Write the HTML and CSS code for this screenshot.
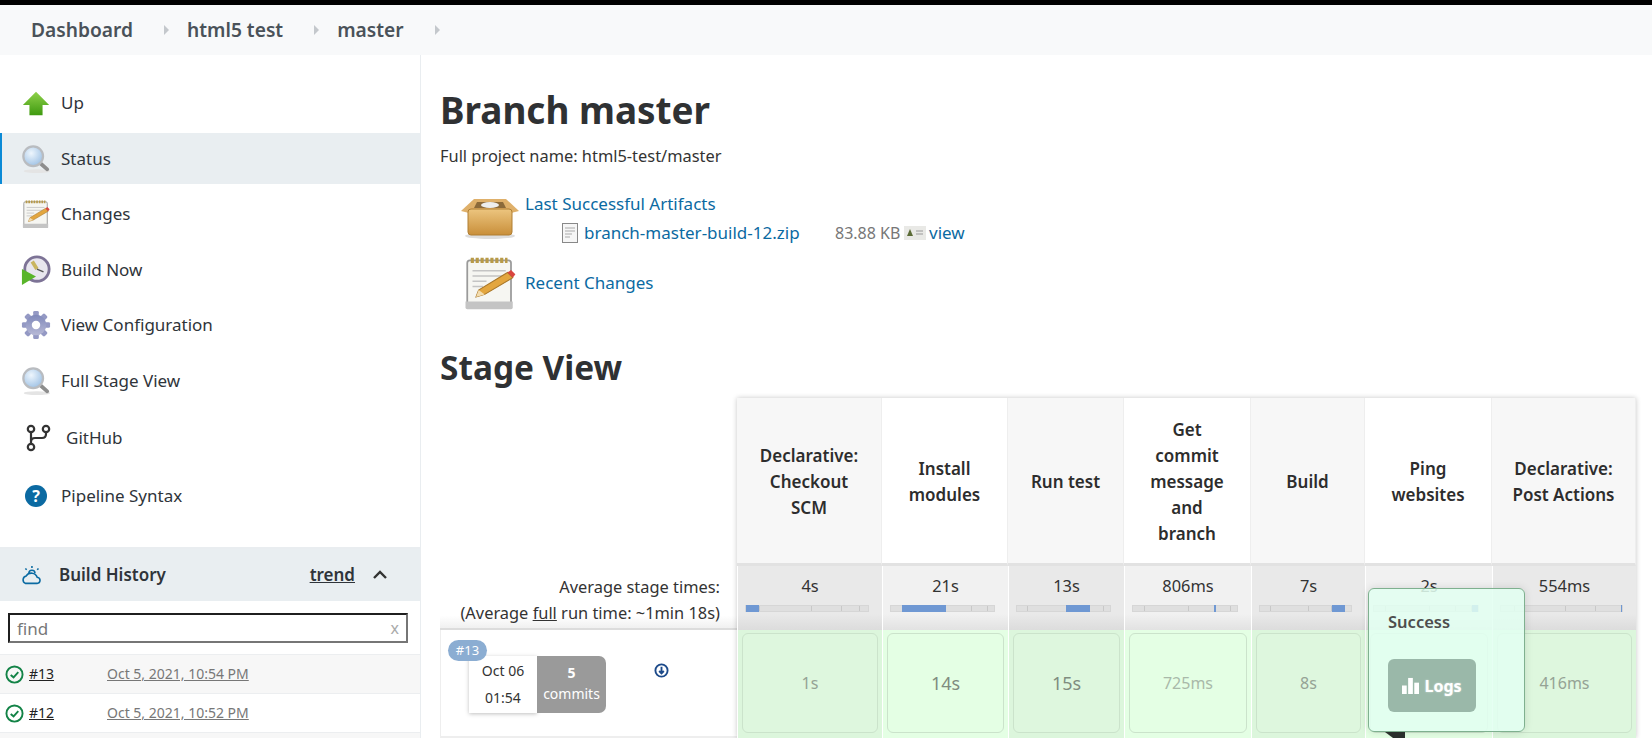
FILE: index.html
```html
<!DOCTYPE html>
<html lang="en">
<head>
<meta charset="utf-8">
<title>html5 test » master</title>
<link rel="stylesheet" href="styles.css">
</head>
<body>
<svg class="defs" width="0" height="0" aria-hidden="true">
  <defs>
    <linearGradient id="g-green" x1="0" y1="0" x2="0" y2="1"><stop offset="0" stop-color="#8fd14a"/><stop offset="1" stop-color="#3f9a10"/></linearGradient>
    <linearGradient id="g-gear" x1="0" y1="0" x2="0" y2="1"><stop offset="0" stop-color="#7f88ba"/><stop offset="1" stop-color="#b7b9d6"/></linearGradient>
    <linearGradient id="g-box" x1="0" y1="0" x2="0" y2="1"><stop offset="0" stop-color="#ecc57f"/><stop offset="1" stop-color="#c98f3a"/></linearGradient>
    <radialGradient id="g-lens" cx=".4" cy=".35" r=".7"><stop offset="0" stop-color="#eef6fd"/><stop offset="1" stop-color="#9cc0e4"/></radialGradient>
    <symbol id="i-mag" viewBox="0 0 32 32">
      <ellipse cx="17" cy="29" rx="14" ry="2" fill="#e4e4e4"/>
      <path d="M20 20l8 7" stroke="#8d8d8d" stroke-width="4" stroke-linecap="round"/>
      <circle cx="13" cy="13" r="10.5" fill="url(#g-lens)" stroke="#b9bcc0" stroke-width="2.4"/>
    </symbol>
    <symbol id="i-note" viewBox="0 0 32 32">
      <rect x="3" y="3" width="25" height="27" rx="1.5" fill="#f6f6f2" stroke="#9a9a9a"/>
      <path d="M5 3h21" stroke="#b89a48" stroke-width="3" stroke-dasharray="1.8 1"/>
      <path d="M6 9h19M6 12h19M6 15h8M6 18h6" stroke="#c4c4c4" stroke-width=".9"/>
      <path d="M2 26.500h27V30a1 1 0 0 1-1 1H3a1 1 0 0 1-1-1z" fill="#c4c4c4"/>
      <path d="M8 24l1.500-4L26 10l3 3-16 9.500z" fill="#e3a63f" stroke="#a8772a" stroke-width=".6"/>
      <path d="M26 10l3 3 1.500-2-2.500-2.500z" fill="#d9453f"/>
      <path d="M8 24l1.500-4 3.500 2.500z" fill="#f3dcae"/>
    </symbol>
  </defs>
</svg>

<div class="topline"></div>
<nav class="crumbs">
  <a class="crumb">Dashboard</a><span class="caret"></span>
  <a class="crumb">html5 test</a><span class="caret"></span>
  <a class="crumb">master</a><span class="caret"></span>
</nav>

<div class="page">
  <aside class="side">
    <ul class="tasks">
      <li class="task"><svg class="ico" viewBox="0 0 32 32"><path d="M16 4L30 18H23V29H9V18H2z" fill="url(#g-green)"/></svg>Up</li>
      <li class="task active"><svg class="ico"><use href="#i-mag"/></svg>Status</li>
      <li class="task"><svg class="ico"><use href="#i-note"/></svg>Changes</li>
      <li class="task"><svg class="ico" viewBox="0 0 32 32"><circle cx="17" cy="15" r="13" fill="#e8e6ee" stroke="#7d7396" stroke-width="3"/><path d="M17 15L12 7" stroke="#c9b560" stroke-width="4"/><path d="M17 15l7 3" stroke="#555" stroke-width="1.500"/><path d="M1 15l15 8-15 9z" fill="#59b52a"/></svg>Build Now</li>
      <li class="task"><svg class="ico" viewBox="0 0 32 32"><g fill="#9499c4"><rect x="13" y="1" width="6" height="30" rx="1.500"/><rect x="13" y="1" width="6" height="30" rx="1.500" transform="rotate(45 16 16)"/><rect x="13" y="1" width="6" height="30" rx="1.500" transform="rotate(90 16 16)"/><rect x="13" y="1" width="6" height="30" rx="1.500" transform="rotate(135 16 16)"/></g><circle cx="16" cy="16" r="11" fill="url(#g-gear)"/><circle cx="16" cy="16" r="4.500" fill="#fff"/></svg>View Configuration</li>
      <li class="task"><svg class="ico"><use href="#i-mag"/></svg>Full Stage View</li>
      <li class="task tall git"><svg class="ico ico-git" viewBox="0 0 26 28" fill="none" stroke="#333" stroke-width="2.200"><circle cx="6" cy="5" r="3.200"/><circle cx="6" cy="23" r="3.200"/><circle cx="21" cy="5" r="3.200"/><path d="M6 8v12M21 8v2q0 4-4 4H10q-4 0-4 4"/></svg>GitHub</li>
      <li class="task tall"><span class="help">?</span>Pipeline Syntax</li>
    </ul>

    <section class="history">
      <header class="hist-head">
        <svg class="weather" viewBox="0 0 24 24" fill="none" stroke="#0b6aa2" stroke-width="1.800"><path d="M5 21h13a3.500 3.500 0 0 0 .5-7A7 7 0 0 0 6 12.500a4.500 4.500 0 0 0-1 8.500z"/><path d="M9 9.500a3.500 3.500 0 0 1 7 0M12.500 1v2.500M5 4l1.500 1.500M20 4l-1.500 1.500" /></svg>
        <span class="hist-title">Build History</span>
        <a class="trend">trend</a>
        <svg class="chev" viewBox="0 0 16 10" fill="none" stroke="#333" stroke-width="2.400"><path d="M2 8l6-6 6 6"/></svg>
      </header>
      <div class="search"><input class="find" placeholder="find" aria-label="find"><span class="clear">x</span></div>
      <div class="build odd"><svg class="ok" viewBox="0 0 20 20" fill="none" stroke="#138347" stroke-width="2"><circle cx="10" cy="10" r="8.500"/><path d="M6 10.500l3 2.500 5-5.500"/></svg><a class="num">#13</a><a class="when">Oct 5, 2021, 10:54 PM</a></div>
      <div class="build"><svg class="ok" viewBox="0 0 20 20" fill="none" stroke="#138347" stroke-width="2"><circle cx="10" cy="10" r="8.500"/><path d="M6 10.500l3 2.500 5-5.500"/></svg><a class="num">#12</a><a class="when">Oct 5, 2021, 10:52 PM</a></div>
      <div class="build odd"></div>
    </section>
  </aside>

  <main class="main">
    <h1 class="title">Branch master</h1>
    <p class="full">Full project name: html5-test/master</p>

    <div class="artifacts">
      <svg class="big" viewBox="0 0 60 46"><ellipse cx="30" cy="43" rx="25" ry="3" fill="#ddd"/><path d="M14 6h32l13 12-8 2H9l-8-2z" fill="#dfb06a"/><path d="M17 9h26l3 6H14z" fill="#8c6a3a"/><ellipse cx="30" cy="12" rx="9" ry="3" fill="#eee"/><rect x="8" y="16" width="44" height="26" rx="3" fill="url(#g-box)" stroke="#b07f33"/></svg>
      <div class="art-text">
        <a class="link">Last Successful Artifacts</a>
        <div class="art-file">
          <svg class="file" viewBox="0 0 16 20"><rect x=".5" y=".5" width="15" height="19" fill="#f6f6f6" stroke="#888"/><path d="M3 5h10M3 8h10M3 11h7M3 14h5" stroke="#aaa"/></svg>
          <a class="link file-name">branch-master-build-12.zip</a>
          <span class="size">83.88 KB</span>
          <svg class="finger" viewBox="0 0 22 14"><rect width="22" height="14" fill="#e9e9e6"/><path d="M6 3l3 7H3z" fill="#5b6b36"/><path d="M12 5h7M12 8h7" stroke="#999"/></svg>
          <a class="link">view</a>
        </div>
      </div>
    </div>
    <div class="changes">
      <svg class="big-note"><use href="#i-note"/></svg>
      <a class="link">Recent Changes</a>
    </div>

    <h2 class="title stage-title">Stage View</h2>

    <div class="stage">
      <div class="corner"></div>
      <div class="th odd">Declarative: Checkout SCM</div>
      <div class="th">Install modules</div>
      <div class="th odd">Run test</div>
      <div class="th narrow">Get commit message and branch</div>
      <div class="th odd">Build</div>
      <div class="th">Ping websites</div>
      <div class="th odd">Declarative: Post Actions</div>

      <div class="avg-label">Average stage times:<br>(Average <u>full</u> run time: ~1min 18s)</div>
      <div class="avg odd">4s<div class="bar"><i class="seg" style="left:0;width:11%"></i></div></div>
      <div class="avg">21s<div class="bar"><i class="seg" style="left:11%;width:42%"></i></div></div>
      <div class="avg odd">13s<div class="bar"><i class="seg" style="left:53%;width:25%"></i></div></div>
      <div class="avg">806ms<div class="bar"><i class="seg" style="left:78%;width:1.5%"></i></div></div>
      <div class="avg odd">7s<div class="bar"><i class="seg" style="left:79%;width:14%"></i></div></div>
      <div class="avg">2s<div class="bar"><i class="seg" style="left:94%;width:6%"></i></div></div>
      <div class="avg odd">554ms<div class="bar"><i class="seg" style="left:99%;width:1%"></i></div></div>

      <div class="run">
        <span class="badge">#13</span>
        <div class="stamp"><div class="date">Oct 06<br>01:54</div><div class="commits"><b>5</b><br>commits</div></div>
        <svg class="dl" viewBox="0 0 16 16" fill="none" stroke="#1c4a8a" stroke-width="2"><circle cx="8" cy="8" r="6.500"/><path d="M8 4v7M5.500 8.500L8 11l2.500-2.500"/></svg>
      </div>
      <div class="cell odd"><div class="tile small">1s</div></div>
      <div class="cell"><div class="tile">14s</div></div>
      <div class="cell odd"><div class="tile">15s</div></div>
      <div class="cell"><div class="tile small pale">725ms</div></div>
      <div class="cell odd"><div class="tile small">8s</div></div>
      <div class="cell"><div class="tile small">2s</div></div>
      <div class="cell odd"><div class="tile small">416ms</div></div>

      <div class="tip">
        <div class="tip-title">Success</div>
        <a class="logs"><svg class="logs-ico" viewBox="0 0 18 18" fill="#fff"><rect x="0" y="9" width="5" height="9"/><rect x="6.500" y="1" width="5" height="17"/><rect x="13" y="6" width="5" height="12"/></svg>Logs</a>
      </div>
      <div class="tip-arrow"></div>
    </div>
  </main>
</div>
</body>
</html>
```
FILE: styles.css
```css
* { box-sizing: border-box; }
html, body { margin: 0; height: 100%; overflow: hidden; background: #fff; }
body { font: 17px/24px "Noto Sans", "Liberation Sans", sans-serif; color: #333; }
.defs { position: absolute; }
.topline { height: 5px; background: #000; }
.crumbs { height: 50px; background: #f8f9fa; display: flex; align-items: center; padding-left: 31px; }
.crumb { font-size: 19.2px; font-weight: 600; color: #4a5259; }
.caret { width: 0; height: 0; border-left: 5px solid #c4c8cc; border-top: 5px solid transparent; border-bottom: 5px solid transparent; margin: 0 18px 0 31px; }

.page { display: flex; height: 683px; overflow: hidden; }
.side { width: 421px; flex: none; border-right: 1px solid #e9edf0; }
.tasks { list-style: none; margin: 0; padding: 22.5px 0 0; }
.task { height: 51px; margin-bottom: 4.5px; display: flex; align-items: center; padding-left: 21px; color: #2f343a; }
.task.active { background: #e9eef1; box-shadow: inset 2px 0 0 #0b8ad6; }
.task.tall { height: 53px; margin-bottom: 5px; }
.ico { width: 30px; height: 30px; margin-right: 10px; flex: none; }
.ico-git { width: 26px; height: 28px; margin: 0 15px 0 4px; }
.git { margin-top: 5px; }
.help { width: 22px; height: 22px; margin: 0 14px 0 4px; border-radius: 50%; background: #0b6aa2; color: #fff; font-weight: 700; font-size: 16px; line-height: 22px; text-align: center; }

.history { margin-top: 25px; border-top: 2px solid #e9edf0; }
.hist-head { height: 52px; background: #e9eef1; display: flex; align-items: center; padding-left: 21px; color: #2f343a; }
.weather { width: 21px; height: 21px; margin-right: 17px; }
.hist-title { font-weight: 600; flex: 1; }
.trend { font-weight: 600; text-decoration: underline; margin-right: 17px; }
.chev { width: 16px; height: 10px; margin-right: 32px; }
.search { margin: 12px 0 11px 8px; width: 400px; height: 30px; position: relative; }
.find { width: 100%; height: 100%; border-width: 2px; border-style: solid; border-color: #1f1f1f #767676 #767676 #1f1f1f; padding: 0 24px 0 7px; font: 17px "Noto Sans", sans-serif; color: #333; outline: none; }
.find::placeholder { color: #777; }
.clear { position: absolute; right: 9px; top: 3px; color: #aaa; font-size: 16px; }
.build { height: 39px; display: flex; align-items: center; padding-left: 5px; font-size: 14px; border-top: 1px solid #eceef0; }
.build.odd { background: #f7f7f7; }
.ok { width: 19px; height: 19px; margin-right: 5px; }
.num { color: #222; text-decoration: underline; width: 78px; }
.when { color: #777; text-decoration: underline; }

.main { flex: 1; padding-left: 19px; min-width: 0; }
.title { margin: 0; font-size: 36.9px; line-height: 44px; font-weight: 700; color: #2f3133; }
.main > .title:first-child { margin-top: 33px; }
.full { margin: 13px 0 0; font-size: 16.4px; line-height: 22px; }
.artifacts { display: flex; margin: 25px 0 0 20px; height: 63px; }
.big { width: 60px; height: 46px; margin-right: 5px; margin-top: 1px; }
.art-text { flex: 1; }
.link { color: #0b6aa2; }
.art-file { display: flex; align-items: center; margin: 3px 0 0 37px; height: 28px; }
.file { width: 16px; height: 20px; margin-right: 6px; }
.file-name { width: 251px; white-space: nowrap; }
.size { color: #777; width: 69px; font-size: 16px; white-space: nowrap; }
.finger { width: 22px; height: 14px; margin-right: 3px; }
.changes { display: flex; align-items: center; margin-left: 21px; height: 56px; }
.big-note { width: 58px; height: 56px; margin-right: 6px; }
.title.stage-title { margin-top: 34px; font-size: 33.4px; }

.stage { position: relative; display: grid; margin-top: 9px; width: 1196px; grid-template-columns: 297px 145px 126px 116px 127px 114px 127px 144px; grid-template-rows: 168px 64px 108px; }
.stage::after { content: ""; position: absolute; left: 297px; right: 0; top: 0; bottom: 0; box-shadow: 0 0 5px rgba(0,0,0,.22); pointer-events: none; }
.th { display: flex; align-items: center; justify-content: center; text-align: center; padding: 2px 18px 0; font-weight: 600; line-height: 26px; background: #fff; color: #2d2d2d; border-right: 1px solid #eee; border-bottom: 3px solid #e2e2e2; }
.th.odd { background: #f7f7f7; }
.th.narrow { padding: 2px 30px 0; }
.avg-label { text-align: right; padding: 8px 17px 0 0; line-height: 26px; font-size: 16.4px; color: #333; background: linear-gradient(#fff 80%, #f0f0f0); border-bottom: 2px solid #dcdcdc; }
.avg { text-align: center; padding-top: 7px; background: linear-gradient(#f1f1f1 75%, #e2e2e2); border-left: 1px solid #fff; color: #333; font-size: 16.4px; line-height: 26px; }
.avg.odd { background: linear-gradient(#e9e9e9 75%, #dcdcdc); }
.bar { position: relative; height: 7px; margin: 6px 13px 0 7px; border: 1px solid #d6d6d6; background: linear-gradient(90deg, #dfdfdf 11%, #c8c8c8 11%, #c8c8c8 11.8%, #dfdfdf 11.8%, #dfdfdf 53%, #c8c8c8 53%, #c8c8c8 53.8%, #dfdfdf 53.8%, #dfdfdf 78%, #c8c8c8 78%, #c8c8c8 78.8%, #dfdfdf 78.8%, #dfdfdf 93%, #c8c8c8 93%, #c8c8c8 93.8%, #dfdfdf 93.8%); }
.seg { position: absolute; top: -1px; bottom: -1px; background: #6f98d3; }
.run { position: relative; border-left: 1px solid #eee; border-bottom: 2px solid #eee; }
.badge { position: absolute; left: 7px; top: 10px; width: 39px; height: 21px; border-radius: 11px; background: #8badd2; color: #fff; font-size: 13px; line-height: 21px; text-align: center; z-index: 1; }
.stamp { position: absolute; left: 28px; top: 26px; display: flex; height: 57px; font-size: 14px; line-height: 27px; text-align: center; }
.date { width: 68px; background: #fff; box-shadow: 0 1px 4px rgba(0,0,0,.25); padding-top: 1px; }
.commits { width: 69px; background: #9a9a9a; color: #fff; border-radius: 0 7px 7px 0; line-height: 21px; padding-top: 6px; }
.dl { position: absolute; left: 213px; top: 33px; width: 15px; height: 15px; }
.cell { padding: 3px 4px 2px; background: #e4ffe4; border-left: 1px solid #fff; }
.cell.odd { background: #dcf6dc; }
.tile { height: 100px; display: flex; align-items: center; justify-content: center; border: 1px solid #cbe3cb; border-radius: 6px; font-size: 18px; color: #7f8c7f; }
.cell.odd .tile { background: #def7de; }
.tile.small { font-size: 16px; color: #95a395; }
.tile.pale { color: #a9b9a9; }
.tip { position: absolute; left: 928px; top: 190px; width: 157px; height: 144px; padding: 21px 19px 0; background: rgba(226,255,241,.86); border: 1px solid #7fb08f; border-radius: 6px; box-shadow: 0 0 8px rgba(0,0,0,.12); z-index: 2; }
.tip-title { font-size: 16.5px; font-weight: 600; color: #4d4d4d; }
.logs { margin-top: 25px; display: flex; align-items: center; justify-content: center; height: 53px; width: 88px; background: #9ab8a9; border-radius: 6px; color: #fff; font-size: 16px; font-weight: 700; text-shadow: 0 0 2px rgba(255,255,255,.6); }
.logs-ico { width: 17px; height: 17px; margin-right: 5px; }
.tip-arrow { position: absolute; left: 945px; top: 334px; width: 20px; height: 6px; background: #2a2f2c; clip-path: polygon(0 0, 100% 0, 100% 100%, 40% 100%); z-index: 2; }
```
